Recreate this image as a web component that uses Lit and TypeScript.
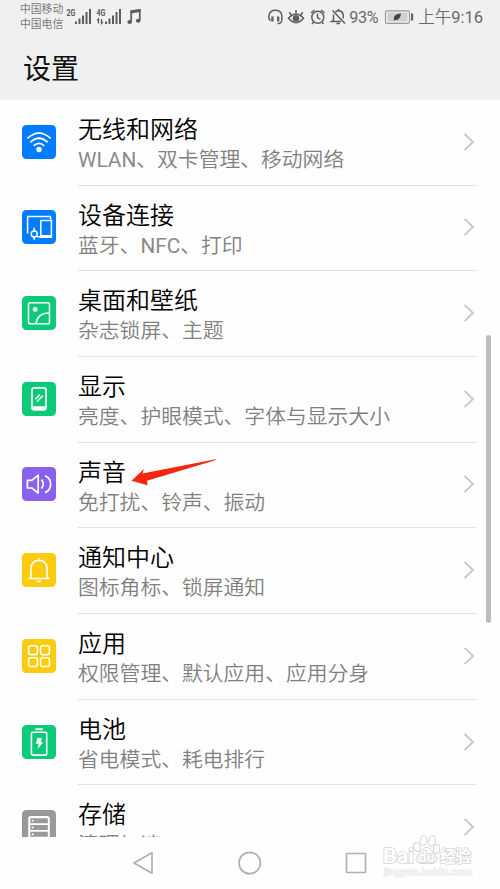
import { LitElement, html, svg, css } from "lit";
import { customElement, property } from "lit/decorators.js";

const glyphs: Record<string, unknown> = {
  wifi: svg`<g fill="none" stroke="#fff" stroke-width="1.7"><path d="M5.3 13.4Q17 2.8 28.7 13.4M8.4 17.3Q17 9.2 25.6 17.3M11.7 20.8Q17 15.8 22.3 20.8"/></g><circle cx="17" cy="24.5" r="2.7" fill="#fff"/>`,
  devices: svg`<g fill="none" stroke="#fff" stroke-width="1.5"><path d="M5.6 23.5V6.5H28.5V9.3M15 26.8H18M18.8 10.5H29.4V27H18.8Z"/><circle cx="12.2" cy="24" r="3"/><path d="M12.2 17.8V21M12.2 27V30"/></g><path d="M18.5 25h11v3h-11z" fill="#fff"/>`,
  picture: svg`<g fill="none" stroke="#fff" stroke-width="1.5"><rect x="6.5" y="6.7" width="21" height="21" rx="1.8"/><path d="M14 27.5C15 20.5 20 17 27.3 17"/></g><circle cx="13.2" cy="13.4" r="2.4" fill="#fff"/>`,
  display: svg`<rect x="10" y="5.9" width="14" height="22" rx="2.3" fill="none" stroke="#fff" stroke-width="1.7"/><path d="M10 24.3h14v2.4q0 1.4-1.5 1.4h-11Q10 28.1 10 26.7z" fill="#fff"/><path d="M13.3 17.3L18 12.6M14.8 19.7L20.8 13.8" stroke="#fff" stroke-width="1.5"/>`,
  sound: svg`<g fill="none" stroke="#fff" stroke-width="1.7" stroke-linejoin="round"><path d="M5.4 13.3H9.8L16.2 8.2V26L9.8 21H5.4Z"/><path d="M19.5 12.6Q23 17 19.5 21.5M23 8.8C30.5 12 30.5 22.3 23 25.6"/></g>`,
  bell: svg`<g fill="none" stroke="#fff" stroke-width="1.6" stroke-linecap="round"><path d="M7 25.5H27M8.9 25V15.5C8.9 4.6 25.1 4.6 25.1 15.5V25M17 7V5.7"/></g><path d="M14.4 27.5h5.2q-.5 2-2.6 2t-2.6-2z" fill="#fff"/>`,
  apps: svg`<g fill="none" stroke="#fff" stroke-width="1.6"><rect x="6.6" y="6.8" width="8.8" height="8.8" rx="2"/><rect x="18.6" y="6.8" width="8.8" height="8.8" rx="2"/><rect x="6.6" y="18.7" width="8.8" height="8.8" rx="2"/><rect x="18.6" y="18.7" width="8.8" height="8.8" rx="2"/></g>`,
  battery: svg`<path d="M13.5 3.2h7v2h-7z" fill="#fff"/><rect x="9.4" y="7.3" width="15.3" height="22.8" rx="1.5" fill="none" stroke="#fff" stroke-width="1.6"/><path d="M15.3 13h4.7l-1.3 4.2h2.4L15.6 24l1-5.3h-2.8z" fill="#fff"/>`,
  storage: svg`<path d="M6.2 34V8.5Q6.2 6 8.7 6H25.3Q27.8 6 27.8 8.5V34z" fill="#fff"/><g fill="#999"><path d="M8.3 8.3h17.5v5H8.3zM8.3 15h17.5v5H8.3zM8.3 21.7h17.5v5H8.3zM8.3 28.4h17.5v4H8.3z"/></g><g fill="#fff"><circle cx="10.7" cy="10.8" r="1"/><circle cx="10.7" cy="17.5" r="1"/><circle cx="10.7" cy="24.2" r="1"/></g>`,
};

const items = [
  ["wifi", "#007dff", "无线和网络", "WLAN、双卡管理、移动网络"],
  ["devices", "#007dff", "设备连接", "蓝牙、NFC、打印"],
  ["picture", "#0bcb79", "桌面和壁纸", "杂志锁屏、主题"],
  ["display", "#0bcb79", "显示", "亮度、护眼模式、字体与显示大小"],
  ["sound", "#8961ec", "声音", "免打扰、铃声、振动"],
  ["bell", "#fccb0e", "通知中心", "图标角标、锁屏通知"],
  ["apps", "#fccb0e", "应用", "权限管理、默认应用、应用分身"],
  ["battery", "#0bcb79", "电池", "省电模式、耗电排行"],
  ["storage", "#999999", "存储", "清理加速"],
];

@customElement("settings-row")
class SettingsRow extends LitElement {
  @property() icon = "";
  @property() color = "";
  @property() heading = "";
  @property() detail = "";

  static styles = css`
    :host { display: flex; flex: none; box-sizing: border-box; height: 85.7px; padding-left: 22px; }
    .icon { flex: none; width: 34px; height: 34px; margin-top: 24.8px; }
    .body { flex: 1; display: flex; box-sizing: border-box; margin: 0 23px 0 22px; border-bottom: 1px solid #e3e3e3; }
    .text { flex: 1; padding-top: 15px; white-space: nowrap; }
    .heading { font-size: 24px; line-height: 30px; color: #000; font-weight: 350; }
    .detail { font-size: 20.8px; line-height: 31.4px; color: #808080; font-weight: 350; }
    .latin { font-weight: 400; color: #8a8a8a; }
    .chevron { flex: none; width: 12px; height: 20px; margin: 31.8px 2px 0 0; }
  `;

  render() {
    return html`
      <svg class="icon" viewBox="0 0 34 34">
        <rect width="34" height="34" rx="4.5" fill=${this.color} />
        ${glyphs[this.icon]}
      </svg>
      <div class="body">
        <div class="text">
          <div class="heading">${this.heading}</div>
          <div class="detail">${this.detail.split(/([A-Z]+)/).map((part) => /[A-Z]/.test(part) ? html`<span class="latin">${part}</span>` : part)}</div>
        </div>
        <svg class="chevron" viewBox="0 0 12 20"><path d="M1.5 1.8L10 10L1.5 18.2" fill="none" stroke="#c6c6c6" stroke-width="1.8" /></svg>
      </div>
    `;
  }
}

@customElement("status-bar")
class StatusBar extends LitElement {
  static styles = css`
    :host { display: flex; height: 34px; color: #6a6a6a; }
    .carriers { margin: 2px 0 0 20px; width: 46px; font-size: 10.8px; line-height: 15px; color: #7a7a7a; white-space: nowrap; }
    .left { width: 78px; height: 34px; }
    .right { display: flex; margin-left: auto; padding-right: 17px; }
    .icons { width: 80px; height: 34px; }
    .batt { width: 30px; height: 34px; margin: 0 4px; }
    .txt { line-height: 35px; font-size: 16.5px; white-space: nowrap; }
    .cjk { font-weight: 350; }
    .pct { width: 31px; margin-left: 2px; font-size: 16.2px; letter-spacing: -0.3px; }
    .net { font: bold 9.5px Roboto, sans-serif; }
  `;

  render() {
    return html`
      <div class="carriers"><div>中国移动</div><div>中国电信</div></div>
      <svg class="left" viewBox="66 0 78 34" fill="#5c5c5c">
        <text class="net" x="66.5" y="16" textLength="9" lengthAdjust="spacingAndGlyphs">2G</text>
        <text class="net" x="96.5" y="16" textLength="9" lengthAdjust="spacingAndGlyphs">4G</text>
        <path d="M75 21.5h2V24h-2zM78.5 18.5h2V24h-2zM82 15.5h2V24h-2zM85.5 12h2V24h-2zM89 9h2V24h-2zM105 21.5h2V24h-2zM108.5 18.5h2V24h-2zM112 15.5h2V24h-2zM115.5 12h2V24h-2zM119 9h2V24h-2z" />
        <path d="M98.5 23.5V19L97 20.5M101.5 19V23.5L103 22" fill="none" stroke="#5c5c5c" stroke-width="1.3" />
        <path d="M131.2 21.5V11.3L139.8 10V20.3" fill="none" stroke="#5c5c5c" stroke-width="1.7" />
        <path d="M130.5 10.5l10-1.5v3l-10 1.5z" />
        <ellipse cx="129.7" cy="22" rx="2.3" ry="2" /><ellipse cx="138.2" cy="20.8" rx="2.3" ry="2" />
      </svg>
      <div class="right">
        <svg class="icons" viewBox="268 0 80 34" fill="none" stroke="#5e5e5e" stroke-width="1.5">
          <path d="M271.5 20.5C269.5 19.5 269.6 16.5 270 15.5C271 8.5 282 8.5 282.8 15.5V20Q282.5 23.5 278.5 23.8" />
          <path d="M273.4 16.5V21.5M279.2 16.5V21.5" stroke-width="2.3" />
          <path d="M289.5 18.3Q297 9.5 304.5 18.3Q297 27 289.5 18.3ZM290.3 12.3L292.3 15M297 10V13M303.7 12.3L301.7 15" />
          <circle cx="297" cy="18.3" r="2.6" fill="#5e5e5e" />
          <circle cx="318.8" cy="17.3" r="6" /><path d="M318.5 13.5V17.5L321.5 19.5M312 13L315.5 10M322 10L325.5 13M314.5 22L313 24M323 22L324.5 24" />
          <path d="M333.5 10.5L346 23.5M334.5 14.5V20.5L332.8 21.5H342M336.5 12C339 9.5 344.2 10.5 344.2 15.5V18.5M339.5 9V11M337.5 23.5H341" />
        </svg>
        <div class="txt pct">93%</div>
        <svg class="batt" viewBox="384 0 30 34">
          <rect x="385.5" y="10.8" width="24" height="12.5" rx="1.5" fill="#f3f3f3" stroke="#999" stroke-width="1.2" />
          <path d="M387.5 12.5h20v9h-20z" fill="#cfcfcf" />
          <path d="M411 13.5h2.2v7H411z" fill="#666" />
          <path d="M401 13.5Q393 14 394 19.5L393.2 20.8L394.5 20.3Q400.5 20.3 401 13.5Z" fill="#444" />
        </svg>
        <div class="txt"><span class="cjk">上午</span>9:16</div>
      </div>
    `;
  }
}

@customElement("app-root")
class AppRoot extends LitElement {
  static styles = css`
    :host { position: relative; display: flex; flex-direction: column; width: 500px; height: 889px; overflow: hidden; background: #fefefe; font-family: Roboto, "Noto Sans CJK SC", sans-serif; }
    header { flex: none; height: 99.9px; background: #f0f0f0; }
    h1 { margin: 16px 0 0 23px; font-size: 28px; line-height: 40px; font-weight: 400; color: #111; }
    main { display: flex; flex-direction: column; flex: none; height: 736.9px; overflow: hidden; }
    nav { display: flex; flex: 1; align-items: center; }
    .navicons { width: 500px; height: 52px; }
    .thumb { position: absolute; right: 9px; top: 335px; width: 5px; height: 288px; border-radius: 3px; background: #bdbdbd; }
    .arrow { position: absolute; left: 130px; top: 456px; width: 90px; height: 32px; }
    .mark { position: absolute; left: 380px; top: 830px; width: 100px; height: 52px; }
    .mark text { paint-order: stroke; stroke: #d6d6d6; stroke-width: 1.6px; fill: #fff; font-weight: 700; }
    .mark .site { stroke: #e2e2e2; stroke-width: 1px; font-weight: 400; fill: #fafafa; }
  `;

  render() {
    return html`
      <header>
        <status-bar></status-bar>
        <h1>设置</h1>
      </header>
      <main>
        ${items.map(([icon, color, heading, detail]) => html`
          <settings-row .icon=${icon} .color=${color} .heading=${heading} .detail=${detail}></settings-row>
        `)}
      </main>
      <nav>
        <svg class="navicons" viewBox="0 837 500 52" fill="none" stroke="#b0b0b0" stroke-width="1.7" stroke-linejoin="round">
          <path d="M152 852.7V873.3L134 863Z" />
          <circle cx="249.7" cy="863" r="10.7" />
          <rect x="346.5" y="853.5" width="19" height="19" rx=".8" />
        </svg>
      </nav>
      <div class="thumb"></div>
      <svg class="arrow" viewBox="130 456 90 32">
        <path d="M131.5 480.8L144 469L142.5 473.5L215.5 459.2L216 460L147 480.8L147.5 485.2Z" fill="#f5260f" />
      </svg>
      <svg class="mark" viewBox="380 830 100 52">
        <text x="383" y="863" font-size="20" textLength="31" lengthAdjust="spacingAndGlyphs">Bai</text>
        <g fill="#fff" stroke="#d2d2d2" stroke-width="1">
          <ellipse cx="417" cy="847" rx="3.3" ry="4.5" transform="rotate(-20 417 847)" />
          <ellipse cx="423.5" cy="840.5" rx="3.5" ry="5" />
          <ellipse cx="432" cy="841" rx="3.5" ry="5" transform="rotate(12 432 841)" />
          <ellipse cx="436.5" cy="849" rx="3.2" ry="4.5" transform="rotate(10 436.5 849)" />
          <path d="M426.5 847.5C431 847.5 432 852 435 855C440 861 435 864.5 426.5 863.5C418 864.5 413 861 418 855C421 852 422 847.5 426.5 847.5Z" />
        </g>
        <text x="418.5" y="861.5" font-size="14" textLength="16" lengthAdjust="spacingAndGlyphs">du</text>
        <text x="440" y="862" font-size="16" textLength="31" lengthAdjust="spacingAndGlyphs">经验</text>
        <text class="site" x="384" y="875" font-size="9.5" textLength="88" lengthAdjust="spacingAndGlyphs">jingyan.baidu.com</text>
      </svg>
    `;
  }
}
